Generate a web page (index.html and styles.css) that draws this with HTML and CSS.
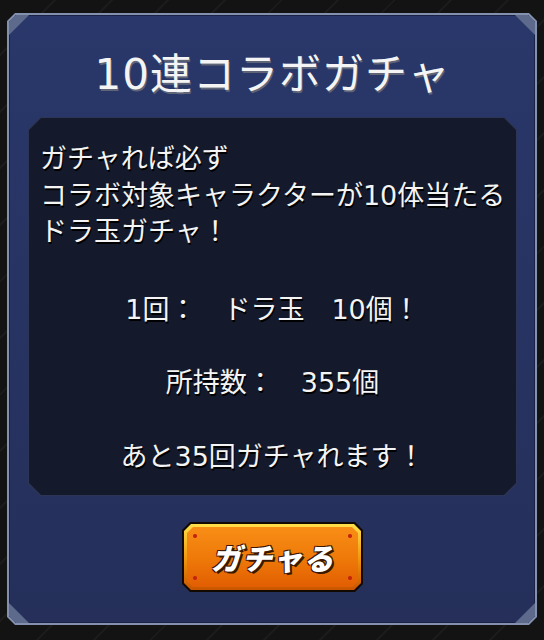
FILE: index.html
```html
<!DOCTYPE html>
<html lang="ja">
<head>
<meta charset="UTF-8" />
<meta name="viewport" content="width=device-width, initial-scale=1" />
<title>10連コラボガチャ</title>
<link rel="stylesheet" href="styles.css">
</head>
<body>

  <!-- Dialog frame -->
  <div class="dialog">
    <div class="dialog-body">
      <span class="corner tl"></span>
      <span class="corner tr"></span>
      <span class="corner bl"></span>
      <span class="corner br"></span>

      <h1 class="dialog-title">10連コラボガチャ</h1>

      <!-- Info box -->
      <div class="info-box">
        <div class="info-body">
          <p class="lead">ガチャれば必ず<br>コラボ対象キャラクターが10体当たる<br>ドラ玉ガチャ！</p>
          <p class="line first">1回：　ドラ玉　10個！</p>
          <p class="line">所持数：　355個</p>
          <p class="line">あと35回ガチャれます！</p>
        </div>
      </div>

      <!-- Action -->
      <button class="gacha-btn" type="button">
        <span class="btn-rim"><span class="btn-face">ガチャる</span></span>
      </button>
    </div>
  </div>

</body>
</html>
```

FILE: styles.css
```css
* {
  margin: 0; padding: 0; box-sizing: border-box;
}
body {
  background:
    repeating-linear-gradient(
      135deg,
      #131313 0 38px,
      #1b1b1b 38px 40px
    );
  background-color: #131313;
  font-family: "DejaVu Sans", "Noto Sans CJK JP", sans-serif;
  color: #f4f4f4;
  width: 544px;
  height: 640px;
  overflow: hidden;
}

/* Outer dialog */
.dialog {
  margin: 13px 7px 15px;
  height: 612px;
  padding: 2px;
  background: #8390ae;
  clip-path: polygon(8px 0, calc(100% - 8px) 0, 100% 8px, 100% calc(100% - 8px), calc(100% - 8px) 100%, 8px 100%, 0 calc(100% - 8px), 0 8px);
}
.dialog-body {
  position: relative;
  height: 100%;
  padding: 30px 18px 0 19px;
  background: linear-gradient(#29376a, #252f5a);
  box-shadow: inset 0 0 0 1px #1a2248;
  clip-path: polygon(7px 0, calc(100% - 7px) 0, 100% 7px, 100% calc(100% - 7px), calc(100% - 7px) 100%, 7px 100%, 0 calc(100% - 7px), 0 7px);
  display: flex;
  flex-direction: column;
  align-items: center;
}

/* Light corner triangles */
.corner {
  position: absolute;
  width: 20px;
  height: 20px;
  background: #5d6a8c;
}
.corner.tl { top: 0; left: 0; clip-path: polygon(0 0, 100% 0, 0 100%); }
.corner.tr { top: 0; right: 0; clip-path: polygon(0 0, 100% 0, 100% 100%); }
.corner.bl { bottom: 0; left: 0; clip-path: polygon(0 0, 100% 100%, 0 100%); }
.corner.br { bottom: 0; right: 0; clip-path: polygon(100% 0, 100% 100%, 0 100%); }

.dialog-title {
  font-size: 42px;
  font-weight: 400;
  line-height: 60px;
  letter-spacing: 1px;
  margin-bottom: 12px;
  white-space: nowrap;
  text-shadow: 1px 2px 0 #5f6476;
}

/* Dark info box */
.info-box {
  width: 489px;
  padding: 1px;
  background: #2c3556;
  clip-path: polygon(12px 0, calc(100% - 12px) 0, 100% 12px, 100% calc(100% - 12px), calc(100% - 12px) 100%, 12px 100%, 0 calc(100% - 12px), 0 12px);
}
.info-body {
  height: 377px;
  padding: 23px 11px 0;
  background: #141a2b;
  font-size: 27px;
  line-height: 36.5px;
  white-space: nowrap;
  text-shadow: 1px 2px 0 #000;
  clip-path: polygon(12px 0, calc(100% - 12px) 0, 100% 12px, 100% calc(100% - 12px), calc(100% - 12px) 100%, 12px 100%, 0 calc(100% - 12px), 0 12px);
}
.line {
  text-align: center;
  margin-top: 37px;
}
.line.first {
  margin-top: 41px;
}

/* Orange button */
.gacha-btn {
  margin-top: 26px;
  width: 181px;
  height: 70px;
  padding: 2px;
  border: none;
  background: #120a02;
  cursor: pointer;
  clip-path: polygon(8px 0, calc(100% - 8px) 0, 100% 8px, 100% calc(100% - 8px), calc(100% - 8px) 100%, 8px 100%, 0 calc(100% - 8px), 0 8px);
}
.btn-rim {
  display: block;
  height: 100%;
  padding: 3px;
  background: linear-gradient(#ffe04a, #f29a10 50%, #c85400);
  clip-path: polygon(7px 0, calc(100% - 7px) 0, 100% 7px, 100% calc(100% - 7px), calc(100% - 7px) 100%, 7px 100%, 0 calc(100% - 7px), 0 7px);
}
.btn-face {
  display: flex;
  align-items: center;
  justify-content: center;
  height: 100%;
  background:
    radial-gradient(circle at 8px 9px, #c4240c 1.5px, transparent 2.5px),
    radial-gradient(circle at calc(100% - 8px) 9px, #c4240c 1.5px, transparent 2.5px),
    radial-gradient(circle at 8px calc(100% - 9px), #c4240c 1.5px, transparent 2.5px),
    radial-gradient(circle at calc(100% - 8px) calc(100% - 9px), #c4240c 1.5px, transparent 2.5px),
    linear-gradient(#f88e16, #ee7808 55%, #e25e02);
  clip-path: polygon(6px 0, calc(100% - 6px) 0, 100% 6px, 100% calc(100% - 6px), calc(100% - 6px) 100%, 6px 100%, 0 calc(100% - 6px), 0 6px);
  font-family: "Noto Sans CJK JP", sans-serif;
  font-size: 30px;
  font-weight: 900;
  font-style: italic;
  letter-spacing: 1px;
  color: #fff;
  text-shadow:
    2px 2px 0 #3a1800,
    -1px -1px 0 #3a1800,
    1px -1px 0 #3a1800,
    -1px 1px 0 #3a1800;
}
```
